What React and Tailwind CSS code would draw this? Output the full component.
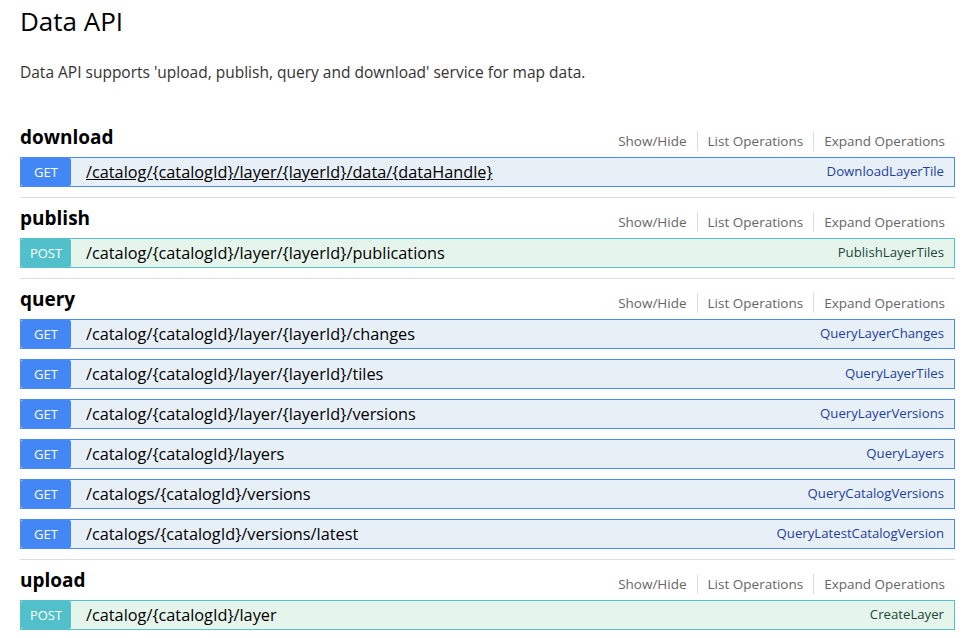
const sections = [
  {
    name: "download",
    ops: [
      { method: "GET", path: "/catalog/{catalogId}/layer/{layerId}/data/{dataHandle}", summary: "DownloadLayerTile", hover: true },
    ],
  },
  {
    name: "publish",
    ops: [{ method: "POST", path: "/catalog/{catalogId}/layer/{layerId}/publications", summary: "PublishLayerTiles" }],
  },
  {
    name: "query",
    ops: [
      { method: "GET", path: "/catalog/{catalogId}/layer/{layerId}/changes", summary: "QueryLayerChanges" },
      { method: "GET", path: "/catalog/{catalogId}/layer/{layerId}/tiles", summary: "QueryLayerTiles" },
      { method: "GET", path: "/catalog/{catalogId}/layer/{layerId}/versions", summary: "QueryLayerVersions" },
      { method: "GET", path: "/catalog/{catalogId}/layers", summary: "QueryLayers" },
      { method: "GET", path: "/catalogs/{catalogId}/versions", summary: "QueryCatalogVersions" },
      { method: "GET", path: "/catalogs/{catalogId}/versions/latest", summary: "QueryLatestCatalogVersion" },
    ],
  },
  {
    name: "upload",
    ops: [{ method: "POST", path: "/catalog/{catalogId}/layer", summary: "CreateLayer" }],
  },
];

const Operation = ({ op }) => {
  const isGet = op.method === "GET";
  return (
    <div
      className={
        isGet
          ? "flex h-[30px] items-center border border-[#4a8bf0] bg-[#e7eff7]"
          : "flex h-[30px] items-center border border-[#56c0cb] bg-[#e6f5ec]"
      }
    >
      <span
        className={
          isGet
            ? "flex h-full w-[50px] items-center justify-center rounded-[2px] bg-[#4287f5] pt-[2px] text-[13px] text-white"
            : "flex h-full w-[50px] items-center justify-center rounded-[2px] bg-[#52c0cb] pt-[2px] text-[13px] text-white"
        }
      >
        {op.method}
      </span>
      <a
        href="#"
        className={
          op.hover
            ? "ml-[15px] flex-1 text-[16.3px] text-black underline"
            : "ml-[15px] flex-1 text-[16.3px] text-black"
        }
      >
        {op.path}
      </a>
      <span className={isGet ? "pr-[10px] text-[13.2px] text-[#1f3f9a]" : "pr-[10px] text-[13.2px] text-[#21453b]"}>
        {op.summary}
      </span>
    </div>
  );
};

const Section = ({ section }) => (
  <div className="border-b border-[#dddddd] pb-[10px]">
    <div className="flex h-[40px] items-center justify-between">
      <h2 className="text-[19px] font-bold text-black">{section.name}</h2>
      <div className="flex items-center pt-[8px] text-[13.5px] text-[#666666]">
        <a href="#" className="pr-[10px]">Show/Hide</a>
        <a href="#" className="border-l border-[#dddddd] px-[10px]">List Operations</a>
        <a href="#" className="border-l border-[#dddddd] pl-[10px] pr-[10px]">Expand Operations</a>
      </div>
    </div>
    <div className="flex flex-col gap-[10px]">
      {section.ops.map((op) => (
        <Operation key={op.path} op={op} />
      ))}
    </div>
  </div>
);

export default function App() {
  return (
    <div className="min-h-screen bg-white px-[20px] font-['Open_Sans','Noto_Sans',sans-serif]">
      <h1 className="pt-[2px] text-[26px] leading-[38px] text-black">Data API</h1>
      <p className="mt-[22px] text-[15.5px] leading-[20px] text-[#333333]">
        Data API supports 'upload, publish, query and download' service for map data.
      </p>
      <div className="mt-[35px]">
        {sections.map((s) => (
          <Section key={s.name} section={s} />
        ))}
      </div>
    </div>
  );
}
